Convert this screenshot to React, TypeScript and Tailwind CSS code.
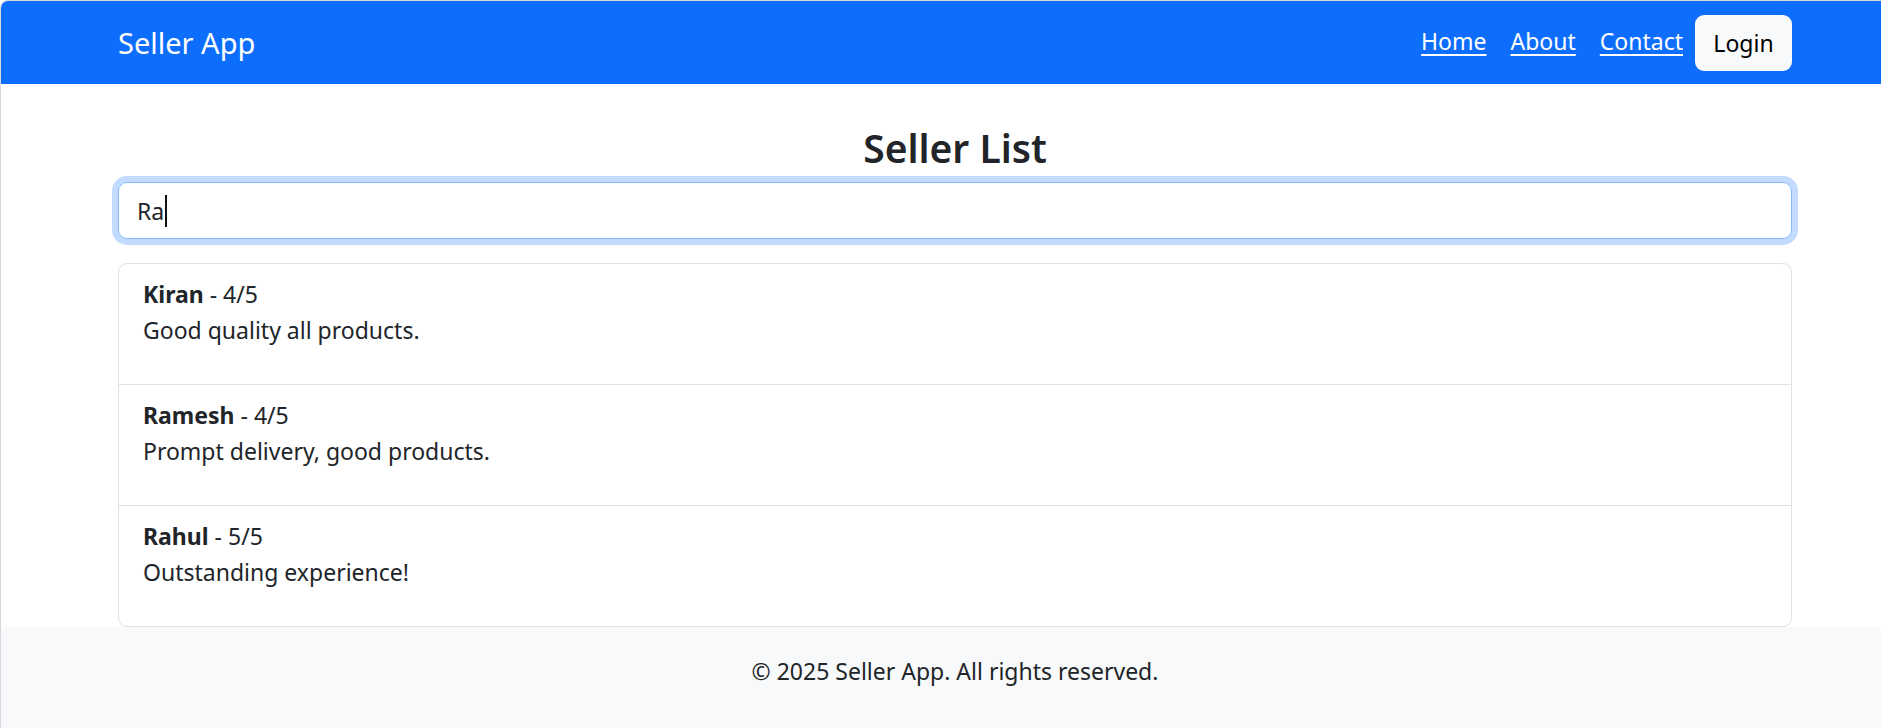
import React from "react";

const sellers = [
  { name: "Kiran", rating: "4/5", review: "Good quality all products." },
  { name: "Ramesh", rating: "4/5", review: "Prompt delivery, good products." },
  { name: "Rahul", rating: "5/5", review: "Outstanding experience!" },
];

export default function App() {
  return (
    <div className="w-[1881px] h-[728px] overflow-hidden bg-white border-l border-t border-[#d6d8db] rounded-tl-[8px] font-['Noto_Sans','Open_Sans',sans-serif] text-[#212529]">
      <nav className="h-[83px] bg-[#0d6efd] flex items-center">
        <div className="ml-[117px] w-[1674px] flex items-center justify-between">
          <span className="text-[29px] leading-[45px] text-white">Seller App</span>
          <div className="flex items-center">
            {["Home", "About", "Contact"].map((l) => (
              <a
                key={l}
                href="#"
                className="px-[12px] pb-[4px] text-[23px] leading-[36px] text-white underline underline-offset-[4px] decoration-[1.5px]"
              >
                {l}
              </a>
            ))}
            <button className="h-[56px] w-[97px] rounded-[9px] bg-[#f8f9fa] text-[23px] leading-[36px] text-black">
              Login
            </button>
          </div>
        </div>
      </nav>

      <main className="ml-[117px] w-[1674px] pt-[37px]">
        <h2 className="text-center text-[39px] leading-[53px] font-semibold mb-[8px]">Seller List</h2>

        <div className="h-[57px] rounded-[9px] border border-[#86b7fe] shadow-[0_0_0_6px_rgba(13,110,253,0.25)] flex items-center pl-[18px] text-[23px] leading-[36px]">
          <span>Ra</span>
          <span className="ml-[1px] w-[2px] h-[32px] bg-[#111]" />
        </div>

        <ul className="mt-[24px] rounded-[9px] border border-[#dee2e6]">
          {sellers.map((s, i) => (
            <li
              key={s.name}
              className={`px-[24px] py-[12px] ${i < sellers.length - 1 ? "border-b border-[#dee2e6]" : ""}`}
            >
              <div className="text-[23px] leading-[36px]">
                <strong className="font-bold">{s.name}</strong> - {s.rating}
              </div>
              <p className="text-[23px] leading-[36px] mb-[24px]">{s.review}</p>
            </li>
          ))}
        </ul>
      </main>

      <footer className="h-[102px] bg-[#f8f9fa] pt-[26px]">
        <div className="ml-[117px] w-[1674px] text-center text-[23px] leading-[36px]">
          © 2025 Seller App. All rights reserved.
        </div>
      </footer>
    </div>
  );
}
